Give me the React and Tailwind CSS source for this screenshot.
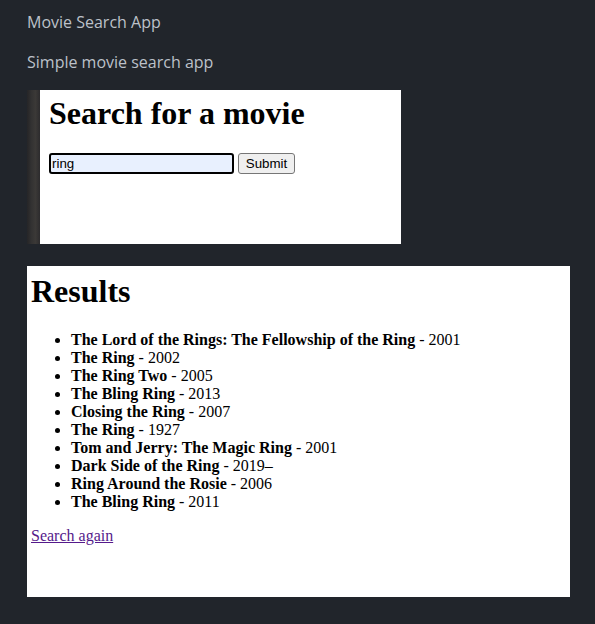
import React from "react";

const movies = [
  ["The Lord of the Rings: The Fellowship of the Ring", "2001"],
  ["The Ring", "2002"],
  ["The Ring Two", "2005"],
  ["The Bling Ring", "2013"],
  ["Closing the Ring", "2007"],
  ["The Ring", "1927"],
  ["Tom and Jerry: The Magic Ring", "2001"],
  ["Dark Side of the Ring", "2019–"],
  ["Ring Around the Rosie", "2006"],
  ["The Bling Ring", "2011"],
];

export default function App() {
  return (
    <div className="min-h-[624px] bg-[#21252b] px-[27px] pt-[11px] pb-[27px]">
      <div className="font-['Open_Sans',sans-serif] text-[16px] text-[#bcc1c9]">
        <div className="leading-[22px]">Movie Search App</div>
        <div className="mt-[18px] leading-[22px]">Simple movie search app</div>
      </div>

      <div className="mt-[17px] flex h-[154px] w-[374px]">
        <div className="w-[13px] bg-[linear-gradient(90deg,#252527_0%,#333232_35%,#3b3937_65%,#2c2b2d_100%)]" />
        <div className="flex-1 bg-white px-[9px] font-['Liberation_Serif',serif] text-black">
          <h1 className="mt-[5px] text-[32px] font-bold leading-[37px]">Search for a movie</h1>
          <form
            className="mt-[21px] flex items-center gap-[4px]"
            onSubmit={(e) => e.preventDefault()}
          >
            <input
              defaultValue="ring"
              className="h-[21px] w-[185px] rounded-[3px] border-2 border-black bg-[#e8f0fe] px-[1px] font-['Liberation_Sans',sans-serif] text-[13.33px] text-black outline-none"
            />
            <button
              type="submit"
              className="h-[21px] w-[57px] rounded-[3px] border border-[#767676] bg-[#efefef] font-['Liberation_Sans',sans-serif] text-[13.33px] leading-[19px] text-black"
            >
              Submit
            </button>
          </form>
        </div>
      </div>

      <div className="mt-[22px] h-[331px] w-[543px] bg-white px-[4px] pt-[7px] font-['Liberation_Serif',serif] text-[16px] text-black">
        <h1 className="text-[32px] font-bold leading-[37px]">Results</h1>
        <ul className="mt-[21px] list-disc pl-[40px] leading-[18px]">
          {movies.map(([t, y], i) => (
            <li key={i}>
              <b>{t}</b> - {y}
            </li>
          ))}
        </ul>
        <p className="mt-[16px] leading-[18px]">
          <a href="#" className="text-[#551a8b] underline">
            Search again
          </a>
        </p>
      </div>
    </div>
  );
}
